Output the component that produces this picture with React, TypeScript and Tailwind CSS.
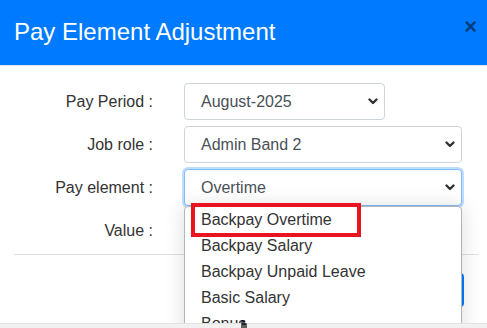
import React from 'react';

const options = ['Backpay Overtime', 'Backpay Salary', 'Backpay Unpaid Leave', 'Basic Salary', 'Bonus'];

function Chevron() {
    return (
        <svg width="10" height="7" viewBox="0 0 10 7" className="shrink-0">
            <polyline points="1.5,1.5 5,5 8.5,1.5" fill="none" stroke="#333" strokeWidth="2.4" strokeLinecap="round" strokeLinejoin="round" />
        </svg>
    );
}

function FakeSelect({ value, width, focused }: { value: string; width: string; focused?: boolean }) {
    return (
        <div
            className={`${width} h-[37px] flex items-center justify-between pl-[16px] pr-[6px] bg-white rounded-[4px] border text-[16px] text-[#495057] ${
                focused ? 'border-[#80bdff] shadow-[0_0_0_2px_rgba(0,123,255,0.25)]' : 'border-[#ced4da]'
            }`}
        >
            <span>{value}</span>
            <Chevron />
        </div>
    );
}

function Row({ label, children }: { label: string; children: React.ReactNode }) {
    return (
        <div className="flex items-center gap-[31px] h-[37px]">
            <div className="w-[153px] text-right text-[16px] text-[#333]">{label}</div>
            {children}
        </div>
    );
}

export default function App() {
    return (
        <div
            className="relative w-[487px] h-[328px] overflow-hidden bg-white"
            style={{ fontFamily: '"Liberation Sans", Arial, sans-serif' }}
        >
            {/* Header */}
            <div className="h-[66px] bg-[#007bff] border-b border-[#dee2e6] flex items-center justify-between pl-[14px] pr-[10px]">
                <h1 className="text-[24px] text-white leading-none -mt-[1px]">Pay Element Adjustment</h1>
                <span className="text-[22px] font-bold text-[#003d80] leading-none -mt-[12px]">×</span>
            </div>

            {/* Body */}
            <div className="pt-[17px] pb-[5px] flex flex-col gap-[6px]">
                <Row label="Pay Period :">
                    <FakeSelect value="August-2025" width="w-[201px]" />
                </Row>
                <Row label="Job role :">
                    <FakeSelect value="Admin Band 2" width="w-[278px]" />
                </Row>
                <Row label="Pay element :">
                    <FakeSelect value="Overtime" width="w-[278px]" focused />
                </Row>
                <Row label="Value :">
                    <div className="w-[278px] h-[37px] rounded-[4px] border border-[#ced4da]" />
                </Row>
            </div>

            {/* Footer */}
            <div className="mr-[9px] ml-[14px] border-t border-[#dee2e6] pt-[18px] flex justify-end pr-[14px]">
                <button className="h-[34px] w-[80px] rounded-[4px] bg-[#007bff] text-white text-[16px]">Save</button>
            </div>

            {/* Open dropdown list */}
            <div className="absolute left-[184px] top-[206px] w-[278px] h-[140px] bg-white border border-[#b5b5b5] rounded-[4px] shadow-[0_0_20px_rgba(0,0,0,0.14)]">
                {options.map((o) => (
                    <div key={o} className="h-[26px] flex items-center pl-[16px] text-[16px] text-[#333]">
                        {o}
                    </div>
                ))}
            </div>

            {/* Red highlight annotation */}
            <div className="absolute left-[191px] top-[203px] w-[170px] h-[34px] border-[4px] border-[#e8141f]" />

            {/* Bottom strip with cursor */}
            <div className="absolute left-0 right-0 bottom-0 h-[5px] bg-[#f1f1f1] border-t border-[#e2e2e2]" />
            <svg className="absolute left-[240px] top-[320px]" width="8" height="8" viewBox="0 0 8 8">
                <path d="M2 0 V8 M2 1 H4 V8 M2 4 H6 V8" fill="none" stroke="#111" strokeWidth="1.3" />
            </svg>
        </div>
    );
}
